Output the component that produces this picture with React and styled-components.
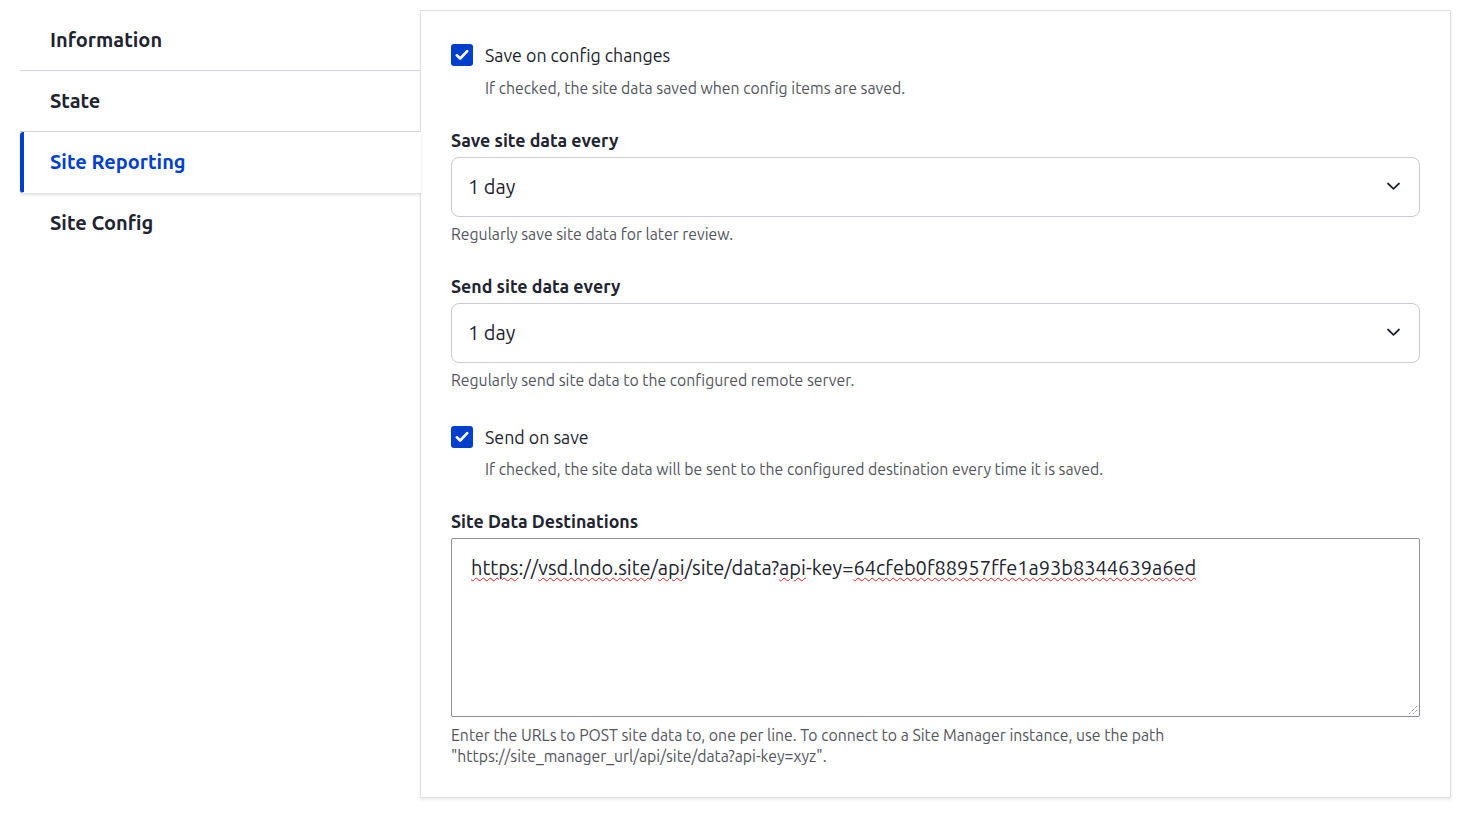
import React from "react";
import styled, { createGlobalStyle } from "styled-components";

const Global = createGlobalStyle`
  html, body { margin: 0; padding: 0; background: #fff; }
  body {
    font-family: "Ubuntu", Lato, "Noto Sans", sans-serif;
    color: #222330;
    -webkit-font-smoothing: antialiased;
  }
  * { box-sizing: border-box; }
`;

const Page = styled.div`
  display: flex;
  align-items: flex-start;
  padding: 10px 14px 20px 20px;
`;

const Sidebar = styled.nav`
  flex: none;
  width: 401px;
  margin-right: -1px;
  position: relative;
  z-index: 1;
  display: flex;
  flex-direction: column;
`;

const Tab = styled.div`
  height: 61px;
  display: flex;
  align-items: center;
  padding-left: ${(p) => (p.$active ? "26px" : "30px")};
  padding-bottom: 1px;
  font-size: 20px;
  font-weight: 700;
  color: ${(p) => (p.$active ? "#003ecc" : "#222330")};
  background: ${(p) => (p.$active ? "#fff" : "transparent")};
  border-left: ${(p) => (p.$active ? "4px solid #003ecc" : "none")};
  border-radius: ${(p) => (p.$active ? "3px 0 0 3px" : "0")};
  border-bottom: 1px solid ${(p) => (p.$last || p.$active ? "transparent" : "#d4d4da")};
  box-shadow: ${(p) => (p.$active ? "0 2px 3px rgba(0,0,0,0.12)" : "none")};
  width: ${(p) => (p.$active ? "401px" : "400px")};
`;

const Panel = styled.section`
  flex: 1;
  border: 1px solid #dedfe4;
  box-shadow: 0 2px 3px rgba(0, 0, 0, 0.08);
  padding: 33px 30px 30px 30px;
  min-height: 788px;
`;

const Item = styled.div`
  margin-bottom: ${(p) => p.$mb || 0}px;
`;

const CheckRow = styled.label`
  display: flex;
  align-items: center;
  gap: 12px;
  height: 22px;
  font-size: 17.8px;
  color: #222330;
`;

const Box = styled.span`
  width: 22px;
  height: 22px;
  border-radius: 3px;
  background: #003ecc;
  display: flex;
  align-items: center;
  justify-content: center;
  flex: none;
`;

const Description = styled.div`
  font-size: 15.8px;
  line-height: 21px;
  color: #545560;
  margin-top: ${(p) => p.$mt || 0}px;
  margin-left: ${(p) => p.$ml || 0}px;
`;

const Label = styled.div`
  font-size: 17.8px;
  font-weight: 700;
  line-height: 22px;
  margin-bottom: 6px;
  color: #222330;
`;

const Select = styled.div`
  height: 60px;
  border: 1px solid #cacbd1;
  border-radius: 8px;
  display: flex;
  align-items: center;
  justify-content: space-between;
  padding: 0 18px 1px 16px;
  font-size: 20px;
  color: #222330;
`;

const TextArea = styled.div`
  position: relative;
  height: 179px;
  border: 1px solid #8e9097;
  border-radius: 2px;
  padding: 14px 19px;
  font-size: 20px;
  line-height: 30px;
  color: #222330;
`;

const Miss = styled.span`
  text-decoration: underline wavy #e0241b;
  text-decoration-thickness: 1px;
  text-underline-offset: 2px;
`;

const Grip = styled.svg`
  position: absolute;
  right: 1px;
  bottom: 1px;
`;

const Check = () => (
  <Box>
    <svg width="14" height="12" viewBox="0 0 14 12">
      <path d="M1.8 6.3 L5.2 9.5 L12.2 2.2" fill="none" stroke="#fff" strokeWidth="2.6" strokeLinecap="round" strokeLinejoin="round" />
    </svg>
  </Box>
);

const Chevron = () => (
  <svg width="15" height="9" viewBox="0 0 15 9">
    <path d="M2 1.5 L7.5 6.8 L13 1.5" fill="none" stroke="#222330" strokeWidth="1.8" strokeLinecap="round" strokeLinejoin="round" />
  </svg>
);

export default function App() {
  return (
    <>
      <Global />
      <Page>
        <Sidebar>
          <Tab>Information</Tab>
          <Tab>State</Tab>
          <Tab $active>Site Reporting</Tab>
          <Tab $last>Site Config</Tab>
        </Sidebar>
        <Panel>
          <Item $mb={30}>
            <CheckRow>
              <Check />
              Save on config changes
            </CheckRow>
            <Description $mt={12} $ml={34}>
              If checked, the site data saved when config items are saved.
            </Description>
          </Item>
          <Item $mb={30}>
            <Label>Save site data every</Label>
            <Select>
              <span>1 day</span>
              <Chevron />
            </Select>
            <Description $mt={7}>Regularly save site data for later review.</Description>
          </Item>
          <Item $mb={35}>
            <Label>Send site data every</Label>
            <Select>
              <span>1 day</span>
              <Chevron />
            </Select>
            <Description $mt={7}>Regularly send site data to the configured remote server.</Description>
          </Item>
          <Item $mb={30}>
            <CheckRow>
              <Check />
              Send on save
            </CheckRow>
            <Description $mt={11} $ml={34}>
              If checked, the site data will be sent to the configured destination every time it is saved.
            </Description>
          </Item>
          <Item>
            <Label>Site Data Destinations</Label>
            <TextArea>
              <Miss>https</Miss>://<Miss>vsd.lndo.site</Miss>/<Miss>api</Miss>/site/data?<Miss>api</Miss>-key=<Miss>64cfeb0f88957ffe1a93b8344639a6ed</Miss>
              <Grip width="10" height="10" viewBox="0 0 10 10">
                <path d="M9 1 L1 9 M9 5 L5 9" stroke="#777" strokeWidth="1" strokeDasharray="1 1" />
              </Grip>
            </TextArea>
            <Description $mt={8}>
              Enter the URLs to POST site data to, one per line. To connect to a Site Manager instance, use the path
              <br />
              "https://site_manager_url/api/site/data?api-key=xyz".
            </Description>
          </Item>
        </Panel>
      </Page>
    </>
  );
}
